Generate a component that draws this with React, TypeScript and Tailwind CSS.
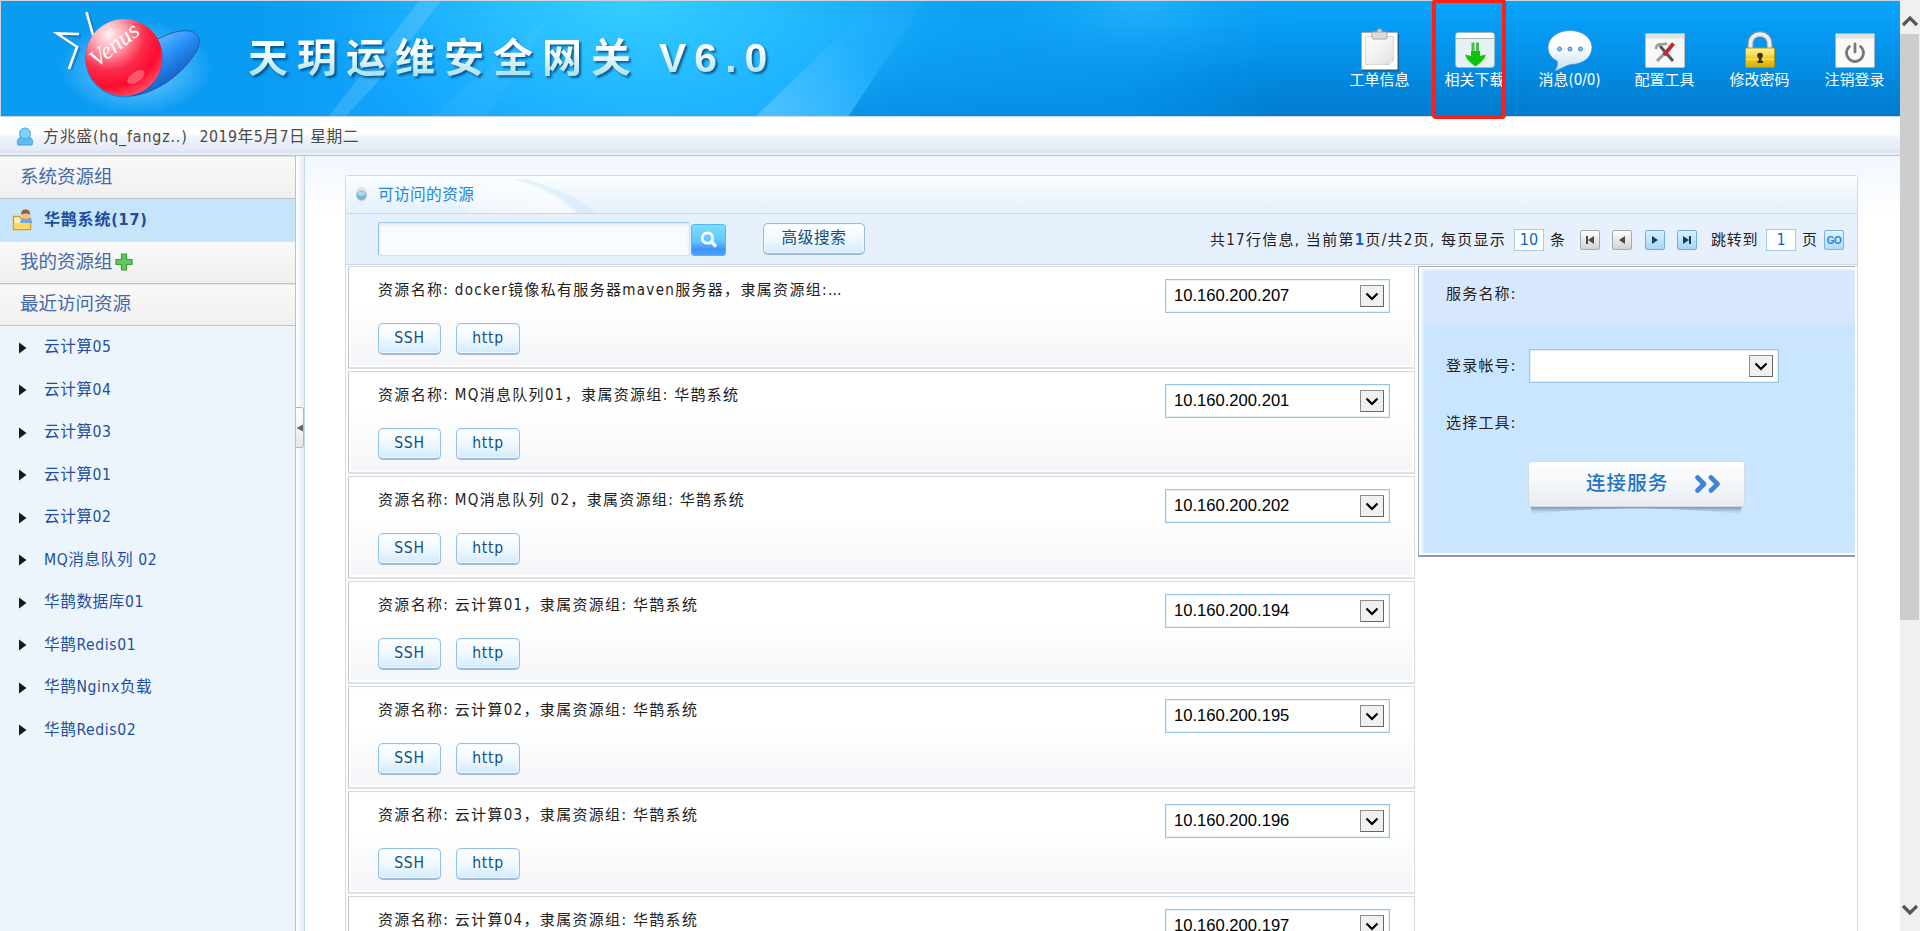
import type { ReactNode } from "react";

const recent = [
  "云计算05",
  "云计算04",
  "云计算03",
  "云计算01",
  "云计算02",
  "MQ消息队列 02",
  "华鹊数据库01",
  "华鹊Redis01",
  "华鹊Nginx负载",
  "华鹊Redis02",
];

const resources = [
  { text: "资源名称: docker镜像私有服务器maven服务器，隶属资源组:…", ip: "10.160.200.207" },
  { text: "资源名称: MQ消息队列01，隶属资源组: 华鹊系统", ip: "10.160.200.201" },
  { text: "资源名称: MQ消息队列 02，隶属资源组: 华鹊系统", ip: "10.160.200.202" },
  { text: "资源名称: 云计算01，隶属资源组: 华鹊系统", ip: "10.160.200.194" },
  { text: "资源名称: 云计算02，隶属资源组: 华鹊系统", ip: "10.160.200.195" },
  { text: "资源名称: 云计算03，隶属资源组: 华鹊系统", ip: "10.160.200.196" },
  { text: "资源名称: 云计算04，隶属资源组: 华鹊系统", ip: "10.160.200.197" },
];

function HeaderArt() {
  return (
    <svg className="absolute inset-0" width="1899" height="115" viewBox="1 1 1899 115">
      <defs>
        <linearGradient id="base" x1="0" y1="0" x2="0" y2="1">
          <stop offset="0" stopColor="#08a5ff" />
          <stop offset="1" stopColor="#007ace" />
        </linearGradient>
        <linearGradient id="left" x1="0" y1="0" x2="1" y2="0">
          <stop offset="0" stopColor="#0a9bf3" />
          <stop offset="0.2" stopColor="#0a9bf3" />
          <stop offset="0.34" stopColor="#14a6ff" />
          <stop offset="0.5" stopColor="#1eb1ff" />
          <stop offset="0.64" stopColor="#19adff" />
          <stop offset="0.72" stopColor="#0fa2f5" />
          <stop offset="0.88" stopColor="#0a9cf0" />
          <stop offset="1" stopColor="#0794e8" stopOpacity="0" />
        </linearGradient>
        <radialGradient id="glow" cx="0.5" cy="0.5" r="0.5">
          <stop offset="0" stopColor="#35ceff" />
          <stop offset="0.4" stopColor="#2cc4ff" stopOpacity="0.75" />
          <stop offset="1" stopColor="#1fb4ff" stopOpacity="0" />
        </radialGradient>
        <radialGradient id="glow2" cx="0.5" cy="0.5" r="0.5">
          <stop offset="0" stopColor="#22b4ff" />
          <stop offset="1" stopColor="#0f9ff5" stopOpacity="0" />
        </radialGradient>
        <linearGradient id="beam" gradientUnits="userSpaceOnUse" x1="775" y1="117" x2="850" y2="40">
          <stop offset="0" stopColor="#ffffff" stopOpacity="0.2" />
          <stop offset="1" stopColor="#ffffff" stopOpacity="0.02" />
        </linearGradient>
        <linearGradient id="lower" x1="0" y1="0" x2="0" y2="1">
          <stop offset="0.2" stopColor="#0093e8" stopOpacity="0" />
          <stop offset="1" stopColor="#0083da" stopOpacity="0.6" />
        </linearGradient>
      </defs>
      <rect x="0" y="0" width="1900" height="117" fill="url(#base)" />
      <rect x="0" y="0" width="1280" height="117" fill="url(#left)" />
      <ellipse cx="630" cy="0" rx="330" ry="160" fill="url(#glow)" />
      <ellipse cx="1140" cy="0" rx="170" ry="90" fill="url(#glow2)" />
      <path d="M925 0H1240V117H848Z" fill="url(#lower)" />
      <path d="M420 0H442L375 85L345 117H328Z" fill="#fff" opacity="0.14" />
      <path d="M560 0L487 117H430L545 20Z" fill="#fff" opacity="0.04" />
      <path d="M755 117L850 26L865 0H925L848 117Z" fill="url(#beam)" />
    </svg>
  );
}

function VenusLogo() {
  return (
    <svg width="190" height="112" viewBox="30 3 190 112">
      <defs>
        <radialGradient id="red" cx="0.3" cy="0.2" r="0.85">
          <stop offset="0" stopColor="#fff3f5" />
          <stop offset="0.25" stopColor="#ffa5b0" />
          <stop offset="0.55" stopColor="#fb2c4c" />
          <stop offset="0.8" stopColor="#ff0a2e" />
          <stop offset="1" stopColor="#ff4a63" />
        </radialGradient>
        <linearGradient id="blue" x1="0.2" y1="0.1" x2="0.8" y2="0.9">
          <stop offset="0" stopColor="#7cc4f8" />
          <stop offset="0.4" stopColor="#2a92fb" />
          <stop offset="0.7" stopColor="#1b69cf" />
          <stop offset="1" stopColor="#0d4f9f" />
        </linearGradient>
        <radialGradient id="halo">
          <stop offset="0.3" stopColor="#7fd0ff" stopOpacity="0.75" />
          <stop offset="1" stopColor="#7fd0ff" stopOpacity="0" />
        </radialGradient>
      </defs>
      <ellipse cx="136" cy="68" rx="76" ry="47" fill="url(#halo)" />
      <g fill="none" stroke="#0f6fb5" strokeWidth="3" opacity="0.6">
        <path d="M88.500 14L95 36" />
        <path d="M81 36L59 35L79 49L71 70" />
      </g>
      <g fill="none" stroke="#fff" strokeWidth="2.600">
        <path d="M86.500 12L93 35" />
        <path d="M79 34L57 33.500L77 47L69 69" />
      </g>
      <path
        d="M132 96C160 92 184 72 196 52C202 41 199 33 190 31C178 29 160 36 148 46Z"
        fill="url(#blue)"
        stroke="#1a5fae"
        strokeWidth="1"
      />
      <circle cx="124" cy="58.500" r="39" fill="#0a5ea8" opacity="0.5" />
      <circle cx="124" cy="57.500" r="38.500" fill="url(#red)" />
      <ellipse cx="136" cy="77" rx="10" ry="5" transform="rotate(-35 136 77)" fill="#ff8f9c" opacity="0.55" />
      <text
        x="97"
        y="68"
        transform="rotate(-38 97 68)"
        className="italic [font-family:'Liberation_Serif',serif]"
        fontSize="24"
        textLength="56"
        lengthAdjust="spacingAndGlyphs"
        fill="#fff"
      >
        Venus
      </text>
    </svg>
  );
}

function ClipboardIcon() {
  return (
    <svg width="44" height="44" viewBox="0 0 44 44">
      <defs>
        <linearGradient id="paper" x1="0" y1="0" x2="1" y2="1">
          <stop offset="0" stopColor="#fff" />
          <stop offset="1" stopColor="#e2e2e2" />
        </linearGradient>
      </defs>
      <rect x="4" y="6" width="37" height="37.500" rx="1" fill="#2b4d6b" opacity="0.7" />
      <rect x="3.500" y="4.500" width="36" height="37" rx="1" fill="#fff" stroke="#a9a9a9" />
      <path d="M7.500 8.500H35.500V30L29 36.500H7.500Z" fill="url(#paper)" stroke="#dadada" />
      <path d="M35.500 30Q31 33 28 36.500Q34 37 35.500 30Z" fill="#fff" stroke="#b5b5b5" strokeWidth="0.700" />
      <rect x="19" y="0.800" width="5" height="5" rx="2" fill="#ddd" stroke="#8d8d8d" />
      <rect x="14" y="4" width="15" height="7" rx="1.500" fill="#dcdcdc" stroke="#a5a5a5" />
    </svg>
  );
}

function DownloadIcon() {
  return (
    <svg width="44" height="44" viewBox="0 0 44 44">
      <rect x="2.500" y="4.500" width="39" height="35" rx="3" fill="#e6f1f1" stroke="#9eb9c2" />
      <path d="M3 10.500V7Q3 5 6 5H38Q41 5 41 7V10.500Z" fill="#fbfdfd" />
      <path d="M3 10.500H41" stroke="#a5b9bd" />
      <path d="M18.500 14.500H21.500V27H18.500ZM23 14.500H26V27H23Z" fill="#19b519" opacity="0.800" />
      <path d="M18 23H27V28L33 26.500Q31 33 22.500 38.500Q14 33 12 26.500L18 28Z" fill="#0cc40c" />
    </svg>
  );
}

function ChatIcon() {
  return (
    <svg width="46" height="44" viewBox="0 0 46 44">
      <defs>
        <linearGradient id="chat" x1="0" y1="0" x2="0" y2="1">
          <stop offset="0.400" stopColor="#fff" />
          <stop offset="1" stopColor="#c3dcf7" />
        </linearGradient>
      </defs>
      <path
        d="M23 2.500C35 2.500 45 9.500 45 19.500C45 29.500 36 36 25 36.500C20 36.500 15 41 7.500 43C10 39.500 11 36 10 33C4 30 1 25 1 19.500C1 9.500 11 2.500 23 2.500Z"
        fill="url(#chat)"
        stroke="#3f8fd4"
        strokeWidth="0.800"
      />
      <g fill="#8ec2f2" stroke="#3b82c6">
        <circle cx="12.500" cy="21" r="2" />
        <circle cx="23" cy="21" r="2" />
        <circle cx="33.500" cy="21" r="2" />
      </g>
    </svg>
  );
}

function ToolIcon() {
  return (
    <svg width="44" height="44" viewBox="0 0 44 44">
      <rect x="2.500" y="5.500" width="39" height="34" rx="1" fill="#f8f8f8" stroke="#b9c0c4" />
      <path d="M3 10.500V7.500Q3 6 5 6H39Q41 6 41 7.500V10.500Z" fill="#dfe2e4" />
      <path d="M17 18L30 33" stroke="#555" strokeWidth="3" />
      <path d="M13 21Q13 15.500 19 16.500L24 15.500" stroke="#9b9b9b" strokeWidth="2.600" fill="none" />
      <path d="M22 25L14 33" stroke="#9a9a9a" strokeWidth="3" />
      <path d="M30.500 15.500L21 27" stroke="#c4262a" strokeWidth="3.800" />
    </svg>
  );
}

function LockIcon() {
  return (
    <svg width="44" height="44" viewBox="0 0 44 44">
      <defs>
        <linearGradient id="gold" x1="0" y1="0" x2="0" y2="1">
          <stop offset="0" stopColor="#fff3a0" />
          <stop offset="0.500" stopColor="#f0cf2e" />
          <stop offset="1" stopColor="#d9a800" />
        </linearGradient>
      </defs>
      <path d="M12.500 22V16C12.500 3 31.500 3 31.500 16V22" fill="none" stroke="#8f9aa0" strokeWidth="6" />
      <path d="M12.500 22V16C12.500 3 31.500 3 31.500 16V22" fill="none" stroke="#e9eef0" strokeWidth="3.800" />
      <rect x="7.500" y="20" width="29" height="19.500" rx="1" fill="url(#gold)" stroke="#b89312" />
      <path d="M8 26H36M8 31.500H36" stroke="#fff0a0" strokeWidth="1" opacity="0.700" />
      <circle cx="22" cy="27.500" r="2.800" fill="#3b2f08" />
      <path d="M20.800 29H23.500V33H25V35H19.500V33H20.800Z" fill="#3b2f08" />
    </svg>
  );
}

function PowerIcon() {
  return (
    <svg width="44" height="44" viewBox="0 0 44 44">
      <rect x="2.500" y="5.500" width="39" height="34" rx="1" fill="#fafafa" stroke="#a9b0b4" />
      <path d="M3 10.500V7.500Q3 6 5 6H39Q41 6 41 7.500V10.500Z" fill="#dfe1e3" />
      <path d="M16.500 18.500A8.500 8.500 0 1 0 27.500 18.500" fill="none" stroke="#727a7d" strokeWidth="2.800" strokeLinecap="round" />
      <path d="M22 16V24" stroke="#727a7d" strokeWidth="2.800" strokeLinecap="round" />
    </svg>
  );
}

const tools: { label: string; icon: ReactNode }[] = [
  { label: "工单信息", icon: <ClipboardIcon /> },
  { label: "相关下载", icon: <DownloadIcon /> },
  { label: "消息(0/0)", icon: <ChatIcon /> },
  { label: "配置工具", icon: <ToolIcon /> },
  { label: "修改密码", icon: <LockIcon /> },
  { label: "注销登录", icon: <PowerIcon /> },
];

function Header() {
  return (
    <header className="relative h-[117px] shrink-0 border border-r-0 border-[#cfd6db]">
      <HeaderArt />
      <div className="relative flex h-full items-start">
        <div className="ml-[29px] mt-[2px] w-[190px]">
          <VenusLogo />
        </div>
        <h1 className="ml-[28px] mt-[31px] flex h-[52px] items-center whitespace-pre bg-gradient-to-b from-white from-35% to-[#a9e0ec] to-85% bg-clip-text font-bold leading-[52px] text-transparent [filter:drop-shadow(2px_2px_1px_rgba(0,60,110,0.75))] [font-family:'Liberation_Sans','Noto_Sans_CJK_SC',sans-serif]">
          <span className="text-[40px] tracking-[9px]">天玥运维安全网关</span>
          <span className="ml-[19px] text-[41px] tracking-[8px]">V6.0</span>
        </h1>
        <nav className="ml-auto mr-[-2px] mt-[27px] flex">
          {tools.map((t) => (
            <div key={t.label} className="flex w-[95px] flex-col items-center">
              {t.icon}
              <span className="-mt-px whitespace-nowrap text-[15px] leading-[18px] text-white">{t.label}</span>
            </div>
          ))}
        </nav>
      </div>
      <div className="absolute left-[1431px] top-[-2px] h-[120px] w-[74px] rounded-[4px] border-4 border-[#ff2015]" />
    </header>
  );
}

function UserBar() {
  return (
    <div className="flex h-[39px] shrink-0 items-center border-b border-[#b9c4d0] bg-[linear-gradient(#ffffff_0,#ffffff_16px,#f0f4fa_20px,#e2eaf4_34px,#cfdfee_35px,#e8f0f6_36px)] pl-[16px] pt-px text-[15.800px] text-[#4a4a4a]">
      <svg width="18" height="20" viewBox="0 0 18 20">
        <path d="M2 18Q0 12 5 10L13 10Q18 12 16 18Z" fill="#5fbdf0" stroke="#3f9fd6" />
        <circle cx="9" cy="6.500" r="5.500" fill="#7ed0fa" stroke="#46a8de" />
      </svg>
      <span className="ml-[9px] tracking-[0.850px]">方兆盛(hq_fangz..)</span>
      <span className="ml-[12px] tracking-[0.450px]">2019年5月7日 星期二</span>
    </div>
  );
}

function GroupTitle({ children }: { children: ReactNode }) {
  return (
    <div className="flex h-[42.500px] items-center border-b border-[#bfc2c6] bg-gradient-to-b from-[#fafafa] to-[#efefef] pl-[20px] text-[18.500px] text-[#4468a8] shadow-[inset_0_1px_0_#e4e4e4]">
      {children}
    </div>
  );
}

function Sidebar() {
  return (
    <aside className="w-[296px] shrink-0 border-r border-[#a9c6e2] bg-[#ecf4fc]">
      <GroupTitle>系统资源组</GroupTitle>
      <div className="flex h-[42.500px] items-center bg-[#c6e5fa] pl-[12px] text-[16px] font-bold text-[#1d4d9b]">
        <svg width="22" height="22" viewBox="0 0 22 22">
          <path d="M1.500 7.500H7.500L9 9.500H18.500V20.500H1.500Z" fill="#fdf0b0" stroke="#dd9a2c" strokeWidth="1.500" />
          <path d="M8 14Q8 9 14 9Q20 9 20.500 14Z" fill="#6fa9e0" />
          <circle cx="13.500" cy="6" r="4" fill="#f2c09a" />
          <path d="M9 5.500Q9 0.500 13.500 0.500Q18.500 0.500 18 6Q16 3.500 9 5.500Z" fill="#9c5a35" />
          <path d="M2.500 14H17.500V19.500H2.500Z" fill="#fbd95f" />
        </svg>
        <span className="ml-[10px] tracking-[0.800px]">华鹊系统(17)</span>
      </div>
      <GroupTitle>
        我的资源组
        <svg width="18" height="18" viewBox="0 0 18 18" className="ml-[2px]">
          <path d="M6.500 1H11.500V6.500H17V11.500H11.500V17H6.500V11.500H1V6.500H6.500Z" fill="#5fc95c" stroke="#3a9c3c" strokeWidth="1.200" />
        </svg>
      </GroupTitle>
      <GroupTitle>最近访问资源</GroupTitle>
      <ul>
        {recent.map((r) => (
          <li key={r} className="flex h-[42.500px] items-center pl-[18px] pt-px text-[15.600px] tracking-[0.600px] text-[#1f4f9e]">
            <svg width="9" height="12" viewBox="0 0 9 12">
              <path d="M1 0.500L8.500 6L1 11.500Z" fill="#1a1a1a" />
            </svg>
            <span className="ml-[17px]">{r}</span>
          </li>
        ))}
      </ul>
    </aside>
  );
}

function Splitter() {
  return (
    <div className="flex w-[9px] shrink-0 flex-col border-r border-[#c3d8ec] bg-gradient-to-r from-white to-[#e6eef6]">
      <div className="mt-[251px] flex h-[41px] items-center justify-center rounded-r-[3px] border border-l-0 border-[#b4b8bd] bg-gradient-to-b from-white to-[#e8e8e8]">
        <svg width="7" height="8" viewBox="0 0 7 8">
          <path d="M7 0.500V7.500L0.500 4Z" fill="#666" />
        </svg>
      </div>
    </div>
  );
}

function PillButton({ children, width }: { children: ReactNode; width: string }) {
  return (
    <button
      className={`${width} flex h-[32px] shrink-0 items-center justify-center rounded-[5px] border border-b-2 border-[#93bfe8] border-b-[#9dbbdb] bg-gradient-to-b from-white via-[#f0f9ff] to-[#d3eafd] text-[15.600px] tracking-[0.700px] text-[#15507a] shadow-[inset_0_0_0_1px_#eef8ff]`}
    >
      {children}
    </button>
  );
}

function Select({ value, width }: { value: string; width: string }) {
  return (
    <div
      className={`${width} flex h-[34px] items-center justify-between border border-[#98c4e8] bg-white pl-[8px] pr-[5px] shadow-[inset_0_0_0_1px_#e3f1fb] [font-family:'Liberation_Sans',sans-serif]`}
    >
      <span className="text-[16.600px] tracking-normal text-black">{value}</span>
      <span className="flex h-[22px] w-[24px] items-center justify-center border border-[#8d8d8d] border-b-[#666] border-r-[#666] bg-[#f0f0f0]">
        <svg width="14" height="9" viewBox="0 0 14 9">
          <path d="M1.500 1.500L7 7L12.500 1.500" fill="none" stroke="#000" strokeWidth="2.200" />
        </svg>
      </span>
    </div>
  );
}

function PagerButton({ d, active, margin }: { d: string; active?: boolean; margin: string }) {
  return (
    <span
      className={`${margin} flex h-[20px] w-[20px] shrink-0 items-center justify-center rounded-[2px] border ${
        active ? "border-[#6faee6] bg-gradient-to-b from-[#d8efff] to-[#a9d5fa]" : "border-[#a9a9a9] bg-gradient-to-b from-white to-[#d2d2d2]"
      }`}
    >
      <svg width="10" height="8" viewBox="0 0 10 8">
        <path d={d} fill={active ? "#123f63" : "#4a4a4a"} />
      </svg>
    </span>
  );
}

function PageInput({ value, margin }: { value: string; margin: string }) {
  return (
    <span className={`${margin} flex h-[22px] w-[30px] shrink-0 items-center justify-center border border-[#a7cbe6] bg-white text-[16px] text-[#0a66cf]`}>
      {value}
    </span>
  );
}

function Toolbar() {
  return (
    <div className="flex h-[51px] shrink-0 items-center border-b border-[#cbd6e6] bg-[#e7f0fd] pl-[32px] text-[15px] text-[#222]">
      <div className="h-[34px] w-[312px] shrink-0 rounded-[2px] border border-b-[#d5e3f0] border-l-[#8fc0ea] border-r-[#d5e3f0] border-t-[#9cc8ec] bg-[#f8fbff] shadow-[inset_0_2px_3px_#dceaf6]" />
      <div className="ml-px mt-px flex h-[32px] w-[35px] shrink-0 items-center justify-center rounded-[3px] border border-[#55b2f5] bg-[linear-gradient(#7fdcff_0,#62c4fd_55%,#3f92f8_80%,#4da4fb_100%)]">
        <svg width="18" height="18" viewBox="0 0 18 18">
          <circle cx="7.500" cy="7" r="5.200" fill="none" stroke="#fff" strokeWidth="2.800" />
          <path d="M11.500 11L16 15.500" stroke="#fff" strokeWidth="3.200" />
        </svg>
      </div>
      <div className="ml-[37px]">
        <PillButton width="w-[102px]">高级搜索</PillButton>
      </div>
      <div className="ml-auto mr-[13px] flex shrink-0 items-center whitespace-pre pt-[2px]">
        <span className="w-[295px] tracking-[1.270px]">
          共17行信息, 当前第<b className="text-[#0a66cf]">1</b>页/共2页, 每页显示
        </span>
        <PageInput value="10" margin="ml-[9px]" />
        <span className="ml-[6px]">条</span>
        <PagerButton margin="ml-[15px]" d="M1 0H3V8H1ZM9 0V8L3 4Z" />
        <PagerButton margin="ml-[12px]" d="M8 0V8L2 4Z" />
        <PagerButton margin="ml-[13px]" active d="M2 0V8L8 4Z" />
        <PagerButton margin="ml-[12px]" active d="M7 0H9V8H7ZM1 0V8L7 4Z" />
        <span className="ml-[14px] w-[47px] tracking-[0.800px]">跳转到</span>
        <PageInput value="1" margin="ml-[8px]" />
        <span className="ml-[6px]">页</span>
        <span className="ml-[7px] flex h-[20px] w-[20px] items-center justify-center rounded-[2px] border border-[#7bb4e6] bg-gradient-to-b from-[#e3f4ff] to-[#b3dbfa] text-[10px] font-bold tracking-[-0.500px] text-[#2a86cf] [font-family:'Liberation_Sans',sans-serif]">
          GO
        </span>
      </div>
    </div>
  );
}

function ResourceCard({ text, ip }: { text: string; ip: string }) {
  return (
    <div className="mb-[2px] flex h-[103px] shrink-0 justify-between border border-b-2 border-[#d3d8de] border-b-[#dde2e8] border-l-[#c4c6ca] bg-gradient-to-b from-white from-40% to-[#f4f5f8] shadow-[inset_0_0_0_2px_#fdfdfe]">
      <div className="ml-[29px] pt-[11px]">
        <p className="whitespace-nowrap text-[15px] leading-[24px] tracking-[1.320px] text-[#222]">{text}</p>
        <div className="mt-[21px] flex gap-[15px]">
          <PillButton width="w-[63px]">
            <span className="pt-px">SSH</span>
          </PillButton>
          <PillButton width="w-[64px]">
            <span className="pt-px">http</span>
          </PillButton>
        </div>
      </div>
      <div className="mr-[24px] pt-[12px]">
        <Select value={ip} width="w-[225px]" />
      </div>
    </div>
  );
}

function ServicePanel() {
  return (
    <div className="ml-[3px] h-[291px] w-[437px] border-b-2 border-l border-t border-[#9fa9b4] border-b-[#8b9ba8] bg-white pb-[2px] pl-[2px] pt-[2px]">
      <div className="h-full bg-[linear-gradient(#dae8ff_0,#d6e7fe_54px,transparent_54px),repeating-linear-gradient(#cae5ff_0,#cae5ff_10px,#d1e6fd_10px,#d1e6fd_11.500px)] pl-[25px] text-[15px] tracking-[1.200px] text-[#222] shadow-[inset_2px_1px_2px_#eff6ff]">
        <p className="h-[80px] pt-[14px]">服务名称:</p>
        <div className="flex h-[34px] items-center">
          <span className="w-[83px]">登录帐号:</span>
          <Select value="" width="w-[250px]" />
        </div>
        <p className="h-[78px] pt-[29px]">选择工具:</p>
        <div className="relative ml-[82px] w-[217px]">
          <svg className="absolute left-0 top-[42px]" width="217" height="14" viewBox="0 0 217 14">
            <defs>
              <linearGradient id="shade" x1="0" y1="0" x2="0" y2="1">
                <stop offset="0.300" stopColor="#76899f" />
                <stop offset="1" stopColor="#a9c2dc" stopOpacity="0.100" />
              </linearGradient>
            </defs>
            <path d="M2 0H215L212 11Q108 0 4 11Z" fill="url(#shade)" />
          </svg>
          <button className="relative flex h-[46px] w-full items-center rounded-[3px] border border-[#d3dbe2] bg-gradient-to-b from-white to-[#e9edf1] pl-[57px]">
            <span className="text-[19.500px] font-medium tracking-[1.100px] text-[#2273c4]">连接服务</span>
            <svg className="ml-[27px]" width="27" height="18" viewBox="0 0 27 18">
              <path d="M2.500 2.500L9 9L2.500 15.500M16 2.500L22.500 9L16 15.500" fill="none" stroke="#3c86d4" strokeWidth="4.600" strokeLinecap="round" strokeLinejoin="round" />
            </svg>
          </button>
        </div>
      </div>
    </div>
  );
}

function Content() {
  return (
    <main className="flex min-w-0 flex-1 flex-col bg-[linear-gradient(#f1f7ff_0,#ffffff_60px)] pl-[40px] pt-[19px]">
      <section className="flex min-h-0 w-[1513px] flex-1 flex-col rounded-t-[4px] border border-b-0 border-[#cdd8e8]">
        <div className="relative flex h-[38px] shrink-0 items-center overflow-hidden border-b border-[#cbd6e6] bg-gradient-to-b from-[#fafeff] to-[#e4f0fc] pl-[9px] text-[15.700px] tracking-[0.350px] text-[#2384dc]">
          <svg className="absolute left-[50px] top-0" width="230" height="37" viewBox="0 0 230 37">
            <defs>
              <linearGradient id="sheen" x1="0" y1="0" x2="1" y2="0">
                <stop offset="0" stopColor="#fff" stopOpacity="0" />
                <stop offset="1" stopColor="#fff" stopOpacity="0.700" />
              </linearGradient>
            </defs>
            <path d="M0 3H115Q155 14 180 37H75Q50 15 0 3Z" fill="url(#sheen)" />
            <path d="M130 3Q180 18 200 37H184Q160 14 117 3Z" fill="#cfe6f7" opacity="0.450" />
          </svg>
          <svg width="13" height="17" viewBox="0 0 13 17">
            <ellipse cx="6.500" cy="8.500" rx="6" ry="7.500" fill="#e3e6ea" />
            <circle cx="6.500" cy="9.500" r="5" fill="#79b7d3" />
            <ellipse cx="6.500" cy="7.500" rx="3.500" ry="2.300" fill="#b5d8e6" />
          </svg>
          <span className="relative ml-[10px]">可访问的资源</span>
        </div>
        <Toolbar />
        <div className="flex min-h-0 flex-1 pl-[2px] pt-px">
          <div className="flex w-[1067px] flex-col">
            {resources.map((r) => (
              <ResourceCard key={r.ip} text={r.text} ip={r.ip} />
            ))}
          </div>
          <ServicePanel />
        </div>
      </section>
    </main>
  );
}

function Scrollbar() {
  return (
    <div className="flex w-[20px] shrink-0 flex-col items-center bg-[#f0f0f0]">
      <div className="flex h-[34px] items-end pb-[7px]">
        <svg width="16" height="12" viewBox="0 0 16 12">
          <path d="M1 10L8 3L15 10" fill="none" stroke="#555" strokeWidth="3.200" />
        </svg>
      </div>
      <div className="h-[586px] w-[19px] self-start bg-[#cdcdcd]" />
      <svg className="mb-[15px] mt-auto" width="16" height="12" viewBox="0 0 16 12">
        <path d="M1 2L8 9L15 2" fill="none" stroke="#555" strokeWidth="3.200" />
      </svg>
    </div>
  );
}

export default function App() {
  return (
    <div className="flex h-[931px] w-[1920px] overflow-hidden bg-white [font-family:'DejaVu_Sans_Condensed','Noto_Sans_CJK_SC',sans-serif]">
      <div className="flex min-w-0 flex-1 flex-col">
        <Header />
        <UserBar />
        <div className="flex min-h-0 flex-1 overflow-hidden">
          <Sidebar />
          <Splitter />
          <Content />
        </div>
      </div>
      <Scrollbar />
    </div>
  );
}
